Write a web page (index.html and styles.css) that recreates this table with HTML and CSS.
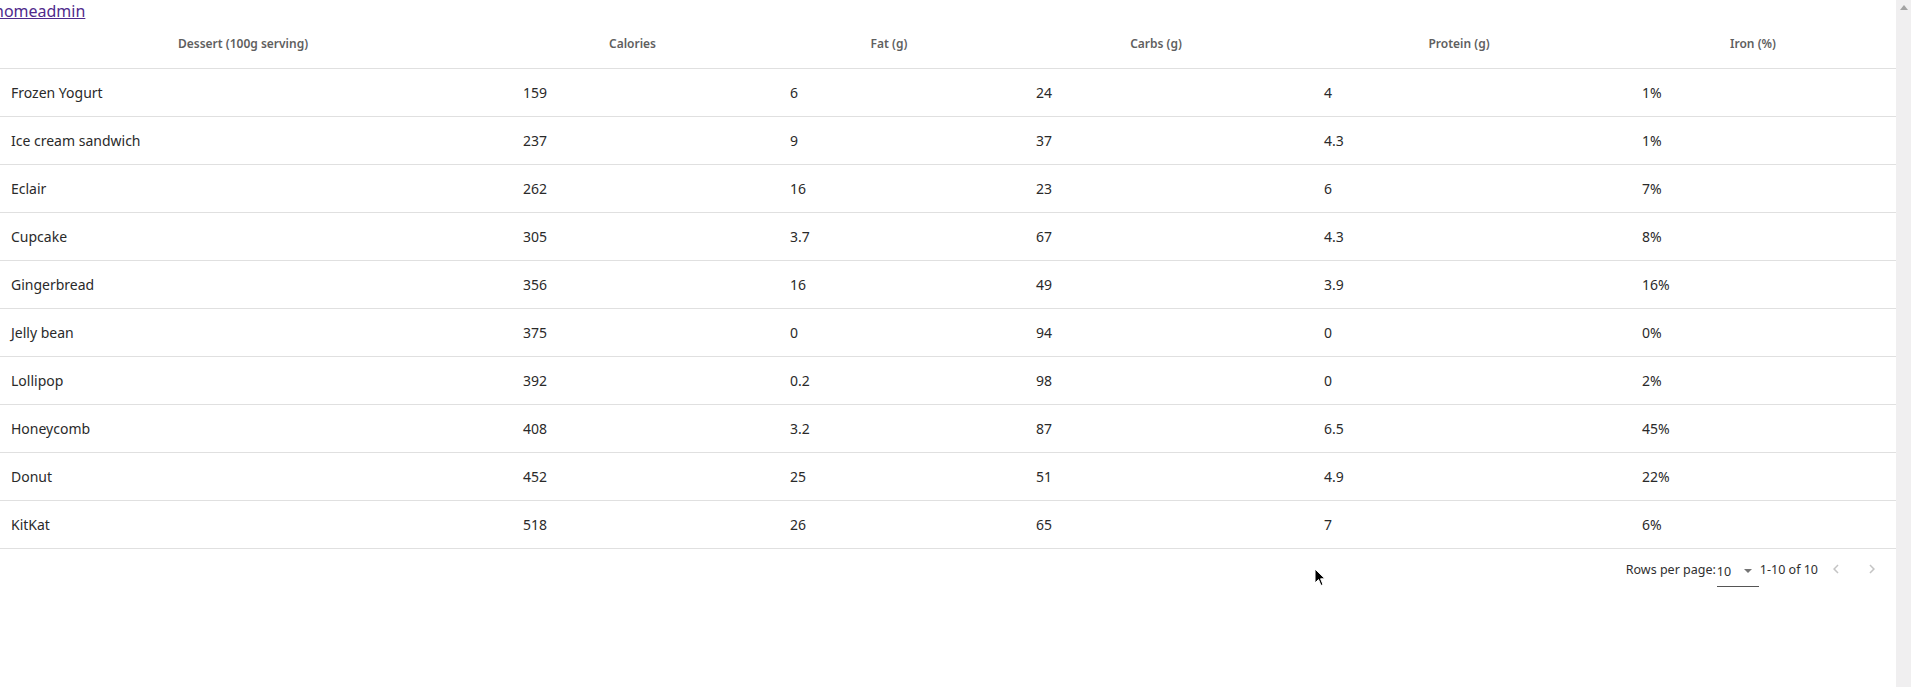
FILE: index.html
```html
<!DOCTYPE html>
<html lang="en">
<head>
<meta charset="utf-8">
<title>homeadmin</title>
<link rel="stylesheet" href="styles.css">
</head>
<body>
<div class="page">
  <main class="content">
    <a class="home-link" href="#">homeadmin</a>
    <div class="table">
      <div class="thead">
        <div class="th">Dessert (100g serving)</div>
        <div class="th">Calories</div>
        <div class="th">Fat&nbsp;(g)</div>
        <div class="th">Carbs&nbsp;(g)</div>
        <div class="th">Protein&nbsp;(g)</div>
        <div class="th th-last">Iron&nbsp;(%)</div>
      </div>
      <div class="tbody">
        <div class="tr"><div class="td">Frozen Yogurt</div><div class="td">159</div><div class="td">6</div><div class="td">24</div><div class="td">4</div><div class="td">1%</div></div>
        <div class="tr"><div class="td">Ice cream sandwich</div><div class="td">237</div><div class="td">9</div><div class="td">37</div><div class="td">4.3</div><div class="td">1%</div></div>
        <div class="tr"><div class="td">Eclair</div><div class="td">262</div><div class="td">16</div><div class="td">23</div><div class="td">6</div><div class="td">7%</div></div>
        <div class="tr"><div class="td">Cupcake</div><div class="td">305</div><div class="td">3.7</div><div class="td">67</div><div class="td">4.3</div><div class="td">8%</div></div>
        <div class="tr"><div class="td">Gingerbread</div><div class="td">356</div><div class="td">16</div><div class="td">49</div><div class="td">3.9</div><div class="td">16%</div></div>
        <div class="tr"><div class="td">Jelly bean</div><div class="td">375</div><div class="td">0</div><div class="td">94</div><div class="td">0</div><div class="td">0%</div></div>
        <div class="tr"><div class="td">Lollipop</div><div class="td">392</div><div class="td">0.2</div><div class="td">98</div><div class="td">0</div><div class="td">2%</div></div>
        <div class="tr"><div class="td">Honeycomb</div><div class="td">408</div><div class="td">3.2</div><div class="td">87</div><div class="td">6.5</div><div class="td">45%</div></div>
        <div class="tr"><div class="td">Donut</div><div class="td">452</div><div class="td">25</div><div class="td">51</div><div class="td">4.9</div><div class="td">22%</div></div>
        <div class="tr"><div class="td">KitKat</div><div class="td">518</div><div class="td">26</div><div class="td">65</div><div class="td">7</div><div class="td">6%</div></div>
      </div>
      <div class="pagination">
        <span class="rows-label">Rows per page:</span>
        <span class="select">
          <span class="select-value">10</span>
          <svg class="select-arrow" viewBox="0 0 10 6" width="10" height="6"><path d="M0 0 L10 0 L5 5 Z" fill="#757575"/></svg>
        </span>
        <span class="range">1-10 of 10</span>
        <span class="page-btn page-prev">
          <svg viewBox="0 0 24 24" width="18" height="18"><path d="M15.4 7.4 14 6l-6 6 6 6 1.4-1.4L10.8 12z" fill="#c4c4c4"/></svg>
        </span>
        <span class="page-btn">
          <svg viewBox="0 0 24 24" width="18" height="18"><path d="M10 6 8.6 7.4 13.2 12l-4.6 4.6L10 18l6-6z" fill="#c4c4c4"/></svg>
        </span>
      </div>
    </div>
  </main>
  <div class="scrollbar">
    <svg class="scroll-arrow" viewBox="0 0 8 5" width="8" height="5"><path d="M0 5 L4 0 L8 5 Z" fill="#a3a3a3"/></svg>
  </div>
</div>
<svg class="cursor" viewBox="0 0 12 19" width="12" height="19"><path d="M1 1 L1 15 L4.5 11.5 L7 17.5 L9 16.6 L6.6 10.8 L11 10.8 Z" fill="#000" stroke="#fff" stroke-width="1"/></svg>
</body>
</html>
```

FILE: styles.css
```css
* { box-sizing: border-box; }

html, body {
  margin: 0;
  padding: 0;
  background: #fff;
}

body {
  font-family: "Segoe UI", "Noto Sans", "Open Sans", sans-serif;
  color: rgba(0, 0, 0, 0.87);
  overflow: hidden;
  height: 687px;
}

.page {
  display: flex;
  height: 687px;
}

.content {
  flex: 1;
  min-width: 0;
}

.home-link {
  display: block;
  height: 22px;
  line-height: 22px;
  font-size: 16px;
  margin-left: -6px;
  color: #4f2a8c;
  text-decoration: underline;
}

.thead,
.tr {
  display: grid;
  grid-template-columns: 512px 267px 246px 288px 318px 1fr;
  align-items: center;
  border-bottom: 1px solid #e0e0e0;
}

.thead {
  height: 47px;
  padding-bottom: 4px;
}

.th {
  display: flex;
  justify-content: center;
  white-space: nowrap;
  font-size: 12px;
  font-weight: 600;
  color: #5f5f5f;
  padding-right: 26px;
}

.th-last {
  padding-right: 21px;
}

.tr {
  height: 48px;
}

.td {
  padding-left: 11px;
  font-size: 14px;
  color: #2a2a2a;
  white-space: nowrap;
}

.pagination {
  display: flex;
  justify-content: flex-end;
  align-items: center;
  height: 40px;
  padding-right: 12px;
  font-size: 12.5px;
  color: #2f2f2f;
}

.rows-label {
  margin-right: 1px;
}

.select {
  display: inline-flex;
  align-items: center;
  width: 42px;
  height: 24px;
  margin-top: 12px;
  padding-bottom: 6px;
  border-bottom: 1px solid #555;
}

.select-value {
  font-size: 12.5px;
  line-height: 14px;
}

.select-arrow {
  margin-left: auto;
  margin-right: 7px;
  width: 8px;
  height: 5px;
}

.range {
  margin-left: 1px;
}

.page-btn {
  display: inline-flex;
  justify-content: center;
  align-items: center;
  width: 24px;
  height: 24px;
  margin-left: 12px;
}

.page-prev { margin-left: 6px; }

.scrollbar {
  width: 15px;
  flex: none;
  background: #f0eff0;
  display: flex;
  justify-content: center;
  padding-top: 5px;
  align-items: flex-start;
}

.cursor {
  position: absolute;
  left: 1314px;
  top: 568px;
}
```
